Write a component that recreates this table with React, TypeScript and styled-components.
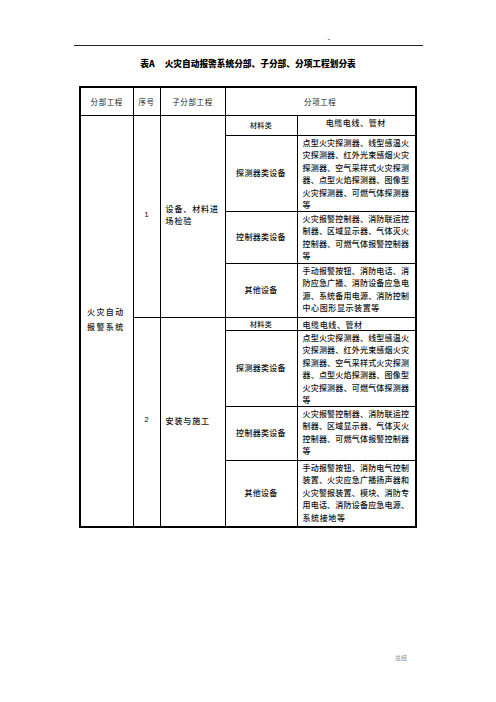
import styled, { createGlobalStyle } from "styled-components";

const GlobalStyle = createGlobalStyle`
  html, body {
    margin: 0;
    padding: 0;
    background: #fff;
  }
  body {
    font-family: "Noto Sans CJK SC", "Liberation Sans", sans-serif;
    color: #111;
  }
`;

type Row = {
  label: string;
  lines: string[];
  h: number;
  small?: boolean;
  center?: boolean;
};

type Section = {
  no: string;
  sub: string[];
  rows: Row[];
};

const detector = [
  "点型火灾探测器、线型感温火",
  "灾探测器、红外光束感烟火灾",
  "探测器、空气采样式火灾探测",
  "器、点型火焰探测器、图像型",
  "火灾探测器、可燃气体探测器",
  "等",
];

const control = [
  "火灾报警控制器、消防联运控",
  "制器、区域显示器、气体灭火",
  "控制器、可燃气体报警控制器",
  "等",
];

const sections: Section[] = [
  {
    no: "1",
    sub: ["设备、材料进", "场检验"],
    rows: [
      { label: "材料类", lines: ["电缆电线、管材"], h: 20, small: true, center: true },
      { label: "探测器类设备", lines: detector, h: 76 },
      { label: "控制器类设备", lines: control, h: 52 },
      {
        label: "其他设备",
        lines: [
          "手动报警按钮、消防电话、消",
          "防应急广播、消防设备应急电",
          "源、系统备用电源、消防控制",
          "中心图形显示装置等",
        ],
        h: 54,
      },
    ],
  },
  {
    no: "2",
    sub: ["安装与施工"],
    rows: [
      { label: "材料类", lines: ["电缆电线、管材"], h: 13, small: true },
      { label: "探测器类设备", lines: detector, h: 76 },
      { label: "控制器类设备", lines: control, h: 54 },
      {
        label: "其他设备",
        lines: [
          "手动报警按钮、消防电气控制",
          "装置、火灾应急广播扬声器和",
          "火灾警报装置、模块、消防专",
          "用电话、消防设备应急电源、",
          "系统接地等",
        ],
        h: 66,
      },
    ],
  },
];

const totalRows = sections.reduce((n, s) => n + s.rows.length, 0);

const App = () => {
  return (
    <Page>
      <GlobalStyle />
      <TopRule>-</TopRule>
      <Title>
        表A<Gap />火灾自动报警系统分部、子分部、分项工程划分表
      </Title>
      <Table>
        <colgroup>
          <col style={{ width: 53 }} />
          <col style={{ width: 27 }} />
          <col style={{ width: 65 }} />
          <col style={{ width: 72 }} />
          <col style={{ width: 119 }} />
        </colgroup>
        <tbody>
          <Tr $h={28}>
            <Head>分部工程</Head>
            <Head>序号</Head>
            <Head>子分部工程</Head>
            <Head colSpan={2}>分项工程</Head>
          </Tr>
          {sections.map((s, i) =>
            s.rows.map((r, j) => (
              <Tr key={`${i}-${j}`} $h={r.h}>
                {i === 0 && j === 0 && (
                  <Cell rowSpan={totalRows}>
                    <Division>
                      火灾自动
                      <br />
                      报警系统
                    </Division>
                  </Cell>
                )}
                {j === 0 && (
                  <Cell rowSpan={s.rows.length} $align="center">
                    <No>{s.no}</No>
                  </Cell>
                )}
                {j === 0 && (
                  <Cell rowSpan={s.rows.length}>
                    <Sub>
                      {s.sub.map((t) => (
                        <div key={t}>{t}</div>
                      ))}
                    </Sub>
                  </Cell>
                )}
                <Cell $align="center">
                  <Label $small={r.small}>{r.label}</Label>
                </Cell>
                <Cell $top>
                  <Lines $h={r.h - 2}>
                    {r.lines.map((t, k) => (
                      <Line
                        key={k}
                        $last={k === r.lines.length - 1}
                        $center={r.center}
                        $tight={r.small}
                      >
                        {t}
                      </Line>
                    ))}
                  </Lines>
                </Cell>
              </Tr>
            ))
          )}
        </tbody>
      </Table>
      <Footer>总结</Footer>
    </Page>
  );
};

export default App;

const Page = styled.div`
  width: 496px;
  height: 702px;
  display: flex;
  flex-direction: column;
  align-items: center;
  overflow: hidden;
`;

const TopRule = styled.div`
  width: 349px;
  height: 12px;
  margin-top: 34px;
  box-sizing: border-box;
  padding-left: 254px;
  border-bottom: 1px solid #222;
  font-family: "Liberation Sans", sans-serif;
  font-size: 8px;
  line-height: 10px;
  color: #333;
`;

const Title = styled.div`
  margin-top: 12px;
  font-size: 8.7px;
  line-height: 12px;
  font-weight: 900;
  color: #000;
  white-space: nowrap;
  display: flex;
  align-items: center;
`;

const Gap = styled.span`
  display: inline-block;
  width: 10px;
`;

const Table = styled.table`
  margin-top: 16px;
  width: 336px;
  table-layout: fixed;
  border-collapse: collapse;
  border: 2px solid #000;
`;

const Tr = styled.tr<{ $h: number }>`
  height: ${(p) => p.$h}px;
`;

const Head = styled.td`
  border: 1px solid #000;
  padding: 0;
  text-align: center;
  vertical-align: middle;
  font-size: 7.5px;
  letter-spacing: 0.6px;
  color: #222;
`;

const Cell = styled.td<{ $align?: string; $top?: boolean }>`
  border: 1px solid #000;
  padding: 0;
  text-align: ${(p) => p.$align || "left"};
  vertical-align: ${(p) => (p.$top ? "top" : "middle")};
  font-size: 8px;
  font-weight: 500;
  color: #111;
`;

const Division = styled.div`
  padding-left: 6px;
  line-height: 15px;
  letter-spacing: 1.4px;
  padding-bottom: 4px;
`;

const No = styled.div`
  font-family: "Liberation Sans", sans-serif;
  font-weight: 400;
  font-size: 8px;
  padding-bottom: 4px;
`;

const Sub = styled.div`
  padding-left: 5px;
  line-height: 12px;
  letter-spacing: 0.9px;
  padding-bottom: 2px;
`;

const Label = styled.div<{ $small?: boolean }>`
  font-size: ${(p) => (p.$small ? "7px" : "8px")};
  letter-spacing: 0.3px;
  line-height: 12px;
`;

const Lines = styled.div<{ $h: number }>`
  height: ${(p) => p.$h}px;
  padding: 1px 6px 0 5px;
  overflow: visible;
`;

const Line = styled.div<{ $last?: boolean; $center?: boolean; $tight?: boolean }>`
  white-space: nowrap;
  line-height: ${(p) => (p.$tight ? "12px" : "12.6px")};
  text-align: ${(p) => (p.$center ? "center" : "justify")};
  text-align-last: ${(p) => (p.$center ? "center" : p.$last ? "left" : "justify")};
  letter-spacing: ${(p) => (p.$last ? "0.6px" : "0")};
`;

const Footer = styled.div`
  width: 496px;
  box-sizing: border-box;
  padding-left: 395px;
  margin-top: 126px;
  font-size: 6px;
  line-height: 8px;
  color: #8a8a8a;
`;
